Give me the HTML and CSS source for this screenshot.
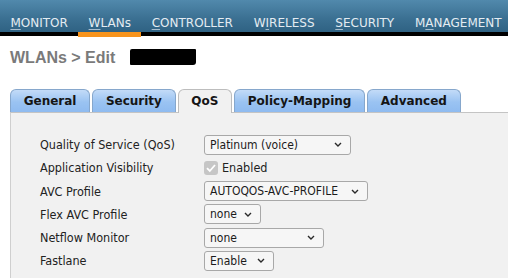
FILE: index.html
```html
<!DOCTYPE html>
<html lang="en">
<head>
    <meta charset="UTF-8">
    <title>WLANs &gt; Edit</title>
    <link rel="stylesheet" href="styles.css">
</head>
<body>
    <!-- Barra de menu principal -->
    <nav class="menu">
        <a class="menu-item"><u>M</u>ONITOR</a>
        <a class="menu-item ativo"><u>W</u>LANs</a>
        <a class="menu-item"><u>C</u>ONTROLLER</a>
        <a class="menu-item">W<u>I</u>RELESS</a>
        <a class="menu-item"><u>S</u>ECURITY</a>
        <a class="menu-item">M<u>A</u>NAGEMENT</a>
    </nav>

    <h1 class="titulo">WLANs &gt; Edit <span class="tarja"></span></h1>

    <!-- Abas -->
    <div class="abas">
        <div class="aba">General</div>
        <div class="aba">Security</div>
        <div class="aba ativa">QoS</div>
        <div class="aba">Policy-Mapping</div>
        <div class="aba">Advanced</div>
    </div>

    <div class="painel">
        <div class="form">
            <div class="rotulo">Quality of Service (QoS)</div>
            <div class="campo"><div class="select w-qos"><span>Platinum (voice)</span><svg width="8" height="5" viewBox="0 0 8 5"><path d="M1 1 L4 4 L7 1" /></svg></div></div>

            <div class="rotulo">Application Visibility</div>
            <div class="campo">
                <span class="check"><svg width="14" height="14" viewBox="0 0 14 14"><path d="M3 7.2 L5.8 10 L11 4" /></svg></span>
                <span class="check-texto">Enabled</span>
            </div>

            <div class="rotulo">AVC Profile</div>
            <div class="campo"><div class="select w-avc"><span>AUTOQOS-AVC-PROFILE</span><svg width="8" height="5" viewBox="0 0 8 5"><path d="M1 1 L4 4 L7 1" /></svg></div></div>

            <div class="rotulo">Flex AVC Profile</div>
            <div class="campo"><div class="select w-flex"><span>none</span><svg width="8" height="5" viewBox="0 0 8 5"><path d="M1 1 L4 4 L7 1" /></svg></div></div>

            <div class="rotulo">Netflow Monitor</div>
            <div class="campo"><div class="select w-netflow"><span>none</span><svg width="8" height="5" viewBox="0 0 8 5"><path d="M1 1 L4 4 L7 1" /></svg></div></div>

            <div class="rotulo">Fastlane</div>
            <div class="campo"><div class="select w-fast"><span>Enable</span><svg width="8" height="5" viewBox="0 0 8 5"><path d="M1 1 L4 4 L7 1" /></svg></div></div>
        </div>
    </div>
</body>
</html>
```

FILE: styles.css
```css
/* Página base */
body {
  margin: 0;
  background-color: #ffffff;
  font-family: "DejaVu Sans", Verdana, sans-serif;
  overflow: hidden;
}

/* Menu superior azul */
.menu {
  display: flex;
  height: 32px;
  background: linear-gradient(#5189ac, #3a6f91 60%, #2f6283);
  border-bottom: 4px solid #000000;
}

.menu-item {
  position: relative;
  padding: 16px 10.4px 0 10.4px;
  font-size: 12px;
  line-height: 14px;
  color: #e4ecf2;
  text-decoration: none;
  white-space: nowrap;
}

.menu-item u {
  text-decoration-color: #a9bfd0;
  text-underline-offset: 2px;
}

/* Linha laranja da aba ativa */
.menu-item.ativo::after {
  content: "";
  position: absolute;
  left: 0;
  right: 0;
  bottom: -5px;
  height: 5px;
  background-color: #f7941d;
}

/* Título */
.titulo {
  margin: 0;
  padding: 12px 10px 0 10px;
  font-family: "Liberation Sans", Arial, sans-serif;
  font-size: 16px;
  line-height: 20px;
  font-weight: bold;
  color: #7a7a7a;
}

.tarja {
  display: inline-block;
  width: 66px;
  height: 16px;
  margin-left: 10px;
  vertical-align: -2px;
  background-color: #000000;
  border-radius: 2px 1px 3px 1px;
}

/* Abas */
.abas {
  display: flex;
  gap: 2px;
  margin-top: 21px;
  padding-left: 10px;
}

.aba {
  box-sizing: border-box;
  height: 23px;
  padding: 0 12.7px;
  line-height: 22px;
  font-size: 12px;
  font-weight: bold;
  color: #151515;
  background: linear-gradient(#c3dbf8, #9ac3f2 55%, #8fbbf0);
  border: 1px solid #86a7cc;
  border-bottom: none;
  border-radius: 6px 6px 0 0;
}

.aba.ativa {
  height: 24px;
  margin-bottom: -1px;
  background: #f1f1f1;
  border-color: #bdbdbd;
  position: relative;
}

/* Painel de conteúdo */
.painel {
  margin-left: 10px;
  min-height: 145px;
  background-color: #f1f1f1;
  border-top: 1px solid #c4c4c4;
  border-left: 1px solid #cfcfcf;
  padding: 20px 0 0 29px;
}

.form {
  display: grid;
  grid-template-columns: 164px auto;
  grid-auto-rows: 23.25px;
  align-items: center;
  font-family: "DejaVu Sans Condensed", "DejaVu Sans", sans-serif;
  font-stretch: condensed;
  color: #222222;
}

.rotulo {
  font-size: 12.5px;
}

.campo {
  display: flex;
  align-items: center;
}

/* Selects desenhados */
.select {
  box-sizing: border-box;
  display: flex;
  align-items: center;
  justify-content: space-between;
  height: 20px;
  padding: 0 8px 0 5px;
  font-size: 12px;
  color: #1b1b1b;
  background-color: #f6f6f6;
  border: 1px solid #a8a8a8;
  border-radius: 3px;
}

.select svg path {
  fill: none;
  stroke: #2a2a2a;
  stroke-width: 1.4;
}

.w-qos { width: 147px; }
.w-avc { width: 164px; }
.w-flex { width: 57px; }
.w-netflow { width: 120px; }
.w-fast { width: 70px; }

/* Checkbox desabilitado */
.check {
  display: flex;
  width: 14px;
  height: 14px;
  background-color: #c6c6c6;
  border-radius: 3px;
}

.check svg path {
  fill: none;
  stroke: #ffffff;
  stroke-width: 1.8;
}

.check-texto {
  margin-left: 4px;
  font-size: 12.5px;
  color: #222222;
}
```
